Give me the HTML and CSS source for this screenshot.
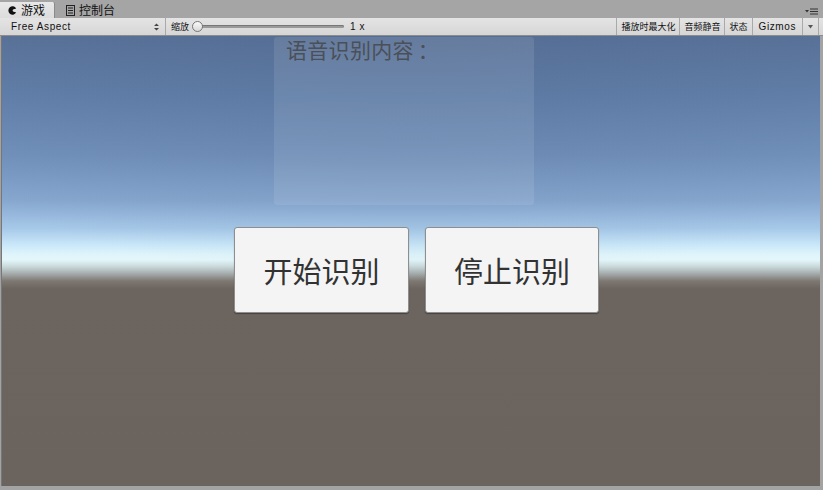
FILE: index.html
```html
<!DOCTYPE html>
<html lang="zh">
<head>
<meta charset="utf-8">
<link rel="stylesheet" href="styles.css">
</head>
<body>
<div class="window">
  <div class="tabbar">
    <div class="tab active">
      <svg class="tab-icon" width="9" height="9" viewBox="0 0 9 9"><path d="M8.2 2.4 A4.2 4.2 0 1 0 8.2 6.6 L5 5.4 Q4.3 4.5 5 3.6 Z" fill="#111"/></svg>
      <span>游戏</span>
    </div>
    <div class="tab">
      <svg class="tab-icon" width="9" height="11" viewBox="0 0 9 11"><rect x="0.5" y="0.5" width="8" height="10" fill="none" stroke="#222"/><path d="M2 3h5M2 5.5h5M2 8h5" stroke="#222"/></svg>
      <span>控制台</span>
    </div>
    <div class="tab-spacer"></div>
    <div class="menu-icon">
      <svg width="13" height="7" viewBox="0 0 13 7"><path d="M0 2h4L2 4.5z" fill="#333"/><path d="M5 1h8M5 3.5h8M5 6h8" stroke="#333" stroke-width="1"/></svg>
    </div>
  </div>
  <div class="toolbar">
    <div class="aspect">
      <span class="lat">Free Aspect</span>
      <svg width="5" height="8" viewBox="0 0 5 8"><path d="M0 3h5L2.5 0.5z M0 5h5L2.5 7.5z" fill="#444"/></svg>
    </div>
    <div class="zoom">
      <span class="cjk-s">缩放</span>
      <div class="slider"><div class="thumb"></div></div>
      <span class="lat">1 x</span>
    </div>
    <div class="tool-spacer"></div>
    <div class="tbtn cjk-s">播放时最大化</div>
    <div class="tbtn cjk-s">音频静音</div>
    <div class="tbtn cjk-s">状态</div>
    <div class="tbtn lat gizmos">Gizmos</div>
    <div class="tbtn drop"><svg width="5" height="4" viewBox="0 0 5 4"><path d="M0 0h5L2.5 3.5z" fill="#555"/></svg></div>
  </div>
  <div class="game">
    <div class="panel">
      <div class="panel-title">语音识别内容<span class="colon">：</span></div>
    </div>
    <div class="buttons">
      <div class="btn">开始识别</div>
      <div class="btn">停止识别</div>
    </div>
  </div>
</div>
</body>
</html>
```
FILE: styles.css
```css
* { box-sizing: border-box; }
html, body { margin: 0; padding: 0; }
body {
  width: 823px;
  height: 490px;
  overflow: hidden;
  background: #a3a3a3;
  font-family: "Noto Sans CJK SC", "Noto Sans", sans-serif;
}
.window {
  display: flex;
  flex-direction: column;
  height: 490px;
}
.tabbar {
  height: 18px;
  display: flex;
  align-items: flex-end;
  background: #a5a5a5;
}
.tab {
  height: 16px;
  display: flex;
  align-items: center;
  gap: 4px;
  padding: 0 9px 0 9px;
  font-size: 12px;
  color: #111;
  line-height: 1;
  white-space: nowrap;
}
.tab.active {
  padding: 0 9px 0 8px;
  background: linear-gradient(#e8e8e8, #dcdcdc);
  border-right: 1px solid #8a8a8a;
  border-radius: 0 2px 0 0;
}
.tab:not(.active) { padding-left: 11px; }
.tab-spacer { flex: 1; }
.menu-icon {
  align-self: center;
  padding: 4px 5px 0 0;
  display: flex;
}
.toolbar {
  height: 18px;
  display: flex;
  align-items: stretch;
  background: linear-gradient(#e4e4e4, #d6d6d6);
  border-bottom: 1px solid #8c8c8c;
  font-size: 10px;
  color: #111;
  white-space: nowrap;
}
.lat {
  font-family: "Liberation Sans", Arial, sans-serif;
  font-size: 10px;
  letter-spacing: 0.6px;
}
.cjk-s {
  font-family: "Noto Sans CJK SC", sans-serif;
  font-size: 9px;
  letter-spacing: 0;
}
.aspect {
  width: 166px;
  display: flex;
  align-items: center;
  justify-content: space-between;
  padding: 0 6px 0 11px;
  border-right: 1px solid #a9a9a9;
}
.zoom {
  display: flex;
  align-items: center;
  padding-left: 5px;
}
.slider {
  position: relative;
  width: 151px;
  height: 3px;
  margin: 0 6px 0 4px;
  background: #9a9a9a;
  border-radius: 2px;
  box-shadow: inset 0 1px 0 #777;
}
.thumb {
  position: absolute;
  left: -1px;
  top: -4px;
  width: 11px;
  height: 11px;
  border-radius: 50%;
  background: linear-gradient(#fafafa, #d8d8d8);
  border: 1px solid #777;
}
.tool-spacer { flex: 1; }
.tbtn {
  display: flex;
  align-items: center;
  padding: 0 4px;
  border-left: 1px solid #a9a9a9;
}
.tbtn.gizmos { padding: 0 6px 0 6px; }
.tbtn.drop {
  padding: 0 5px;
  border-right: 1px solid #a9a9a9;
  margin-right: 4px;
}
.game {
  flex: 1;
  margin: 0 3px 4px 1px;
  display: flex;
  flex-direction: column;
  background:
    radial-gradient(ellipse 70% 55% at 50% 0%, rgba(70,95,135,0.25), rgba(70,95,135,0) 100%),
    linear-gradient(180deg,
      #5a7298 0px,
      #6280aa 60px,
      #7291bb 120px,
      #88a8d0 165px,
      #a6c8e8 192px,
      #c8e6f8 208px,
      #def4fb 218px,
      #e4f6fa 224px,
      #ccdcde 230px,
      #a8b0b0 237px,
      #7e7873 245px,
      #6c645e 253px,
      #6b635d 450px);
  box-shadow: inset 1px 0 0 #777;
}
.panel {
  margin: 1px 0 0 273px;
  width: 260px;
  height: 168px;
  background: rgba(220,228,240,0.12);
  border-radius: 3px;
  padding: 0 12px;
}
.panel-title {
  font-size: 21px;
  line-height: 22px;
  color: #4b4f58;
  margin-top: 1px;
  letter-spacing: 0.3px;
}
.colon { margin-left: 4px; }
.buttons {
  margin: 22px 0 0 233px;
  display: flex;
  gap: 16px;
}
.btn {
  width: 175px;
  height: 86px;
  background: #f4f4f4;
  border: 1px solid #8e8e8e;
  border-radius: 3px;
  display: flex;
  align-items: center;
  justify-content: center;
  font-size: 29px;
  color: #323232;
  box-shadow: 0 1px 1px rgba(0,0,0,0.35);
}
.btn:last-child { width: 174px; }
```
